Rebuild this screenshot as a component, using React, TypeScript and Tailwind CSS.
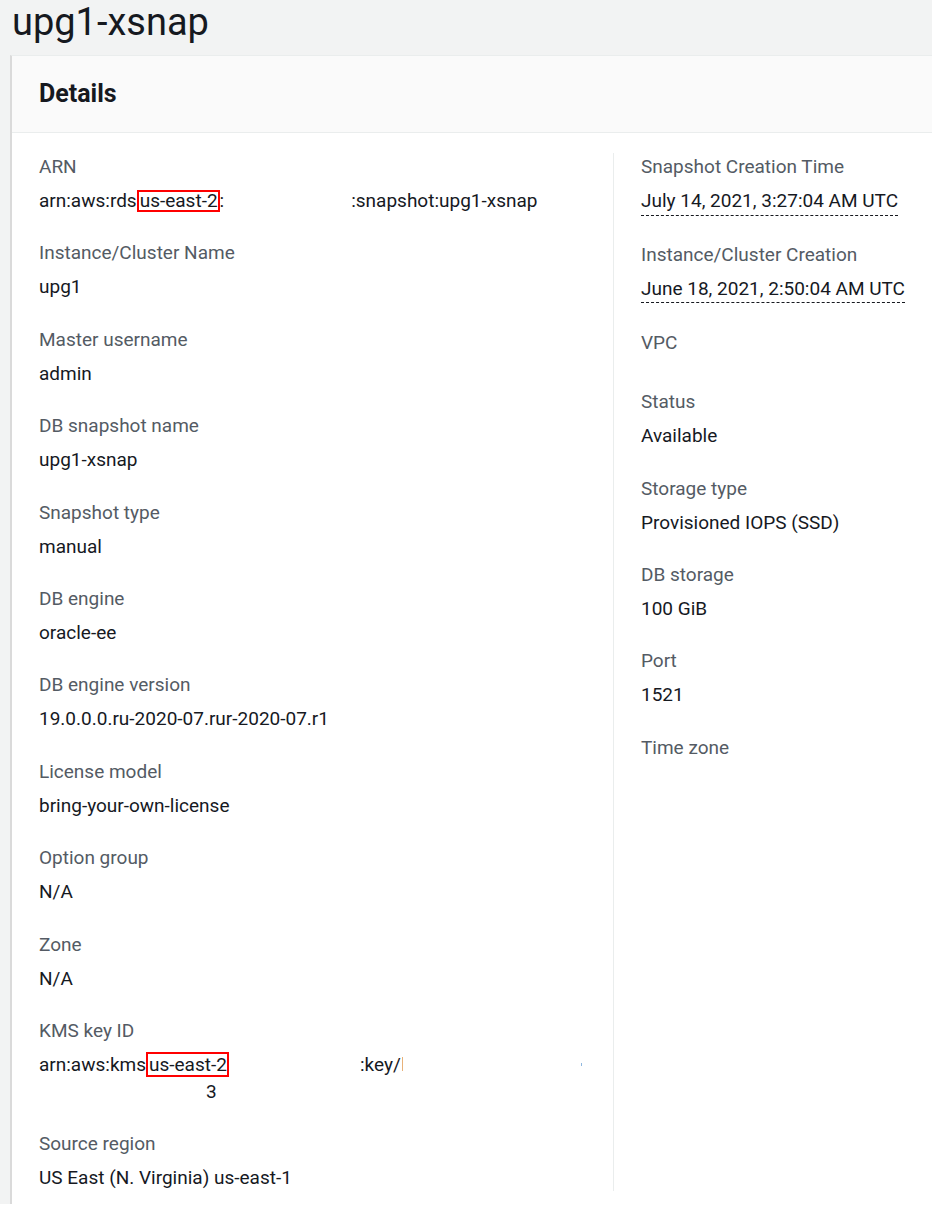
import React from 'react';

type Item = { label: string; value?: React.ReactNode; dotted?: boolean };

const RedBox = ({ children }: { children: React.ReactNode }) => (
  <span className="inline-block border-2 border-[#ff0000] leading-[18px] pl-[1px] pr-0">{children}</span>
);

const leftItems: Item[] = [
  {
    label: 'ARN',
    value: (
      <span className="flex items-center whitespace-nowrap">
        <span>arn:aws:rds</span>
        <RedBox>us-east-2</RedBox>
        <span>:</span>
        <span className="inline-block w-[127px]" />
        <span>:snapshot:upg1-xsnap</span>
      </span>
    ),
  },
  { label: 'Instance/Cluster Name', value: 'upg1' },
  { label: 'Master username', value: 'admin' },
  { label: 'DB snapshot name', value: 'upg1-xsnap' },
  { label: 'Snapshot type', value: 'manual' },
  { label: 'DB engine', value: 'oracle-ee' },
  { label: 'DB engine version', value: '19.0.0.0.ru-2020-07.rur-2020-07.r1' },
  { label: 'License model', value: 'bring-your-own-license' },
  { label: 'Option group', value: 'N/A' },
  { label: 'Zone', value: 'N/A' },
  {
    label: 'KMS key ID',
    value: (
      <span className="block">
        <span className="flex items-center whitespace-nowrap">
          <span>arn:aws:kms</span>
          <span className="inline-block border-2 border-[#ff0000] leading-[21px] pl-[1px] pr-0">us-east-2</span>
          <span className="inline-block w-[131px]" />
          <span>:key/</span>
          <span className="inline-block w-[1px] h-[14px] bg-[#e8b27a] ml-[1px]" />
          <span className="inline-block w-[178px]" />
          <span className="inline-block w-[1px] h-[3px] bg-[#8fb8e0]" />
        </span>
        <span className="block pl-[167px]">3</span>
      </span>
    ),
  },
  { label: 'Source region', value: 'US East (N. Virginia) us-east-1' },
];

const rightItems: Item[] = [
  { label: 'Snapshot Creation Time', value: 'July 14, 2021, 3:27:04 AM UTC', dotted: true },
  { label: 'Instance/Cluster Creation', value: 'June 18, 2021, 2:50:04 AM UTC', dotted: true },
  { label: 'VPC' },
  { label: 'Status', value: 'Available' },
  { label: 'Storage type', value: 'Provisioned IOPS (SSD)' },
  { label: 'DB storage', value: '100 GiB' },
  { label: 'Port', value: '1521' },
  { label: 'Time zone' },
];

const Field = ({ label, value, dotted }: Item) => (
  <div>
    <div className="text-[#545b64] leading-[27px]">{label}</div>
    <div className="mt-[7px] text-[#16191f] leading-[27px]">
      {dotted ? (
        <span className="inline-block border-b border-dashed border-[#16191f] leading-[26px] pb-[0.5px]">{value}</span>
      ) : (
        value
      )}
    </div>
  </div>
);

const App = () => {
  return (
    <div className="min-h-screen bg-white font-['Roboto',sans-serif] text-[19px]">
      <div className="bg-[#f2f3f3]">
        <div className="h-[55px] pl-[12px]">
          <h1 className="text-[38px] leading-[44px] text-[#16191f]">upg1-xsnap</h1>
        </div>

        <div className="ml-[10px] border-l-2 border-t border-[#dadada] border-t-[#eaeded] bg-white">
          <div className="h-[77px] bg-[#fafafa] border-b border-[#eaeded] pl-[27px]">
            <h2 className="text-[25px] font-bold leading-[76px] text-[#16191f]">Details</h2>
          </div>

          <div className="flex pt-[20px] pb-[13px]">
            <div className="w-[601px] pl-[27px] flex flex-col gap-[25.4px]">
              {leftItems.map((it) => (
                <Field key={it.label} {...it} />
              ))}
            </div>
            <div className="flex-1 border-l border-[#eaeded] pl-[27px] flex flex-col gap-[25.4px]">
              {rightItems.map((it) => (
                <Field key={it.label} {...it} />
              ))}
            </div>
          </div>
        </div>
      </div>
    </div>
  );
};

export default App;
